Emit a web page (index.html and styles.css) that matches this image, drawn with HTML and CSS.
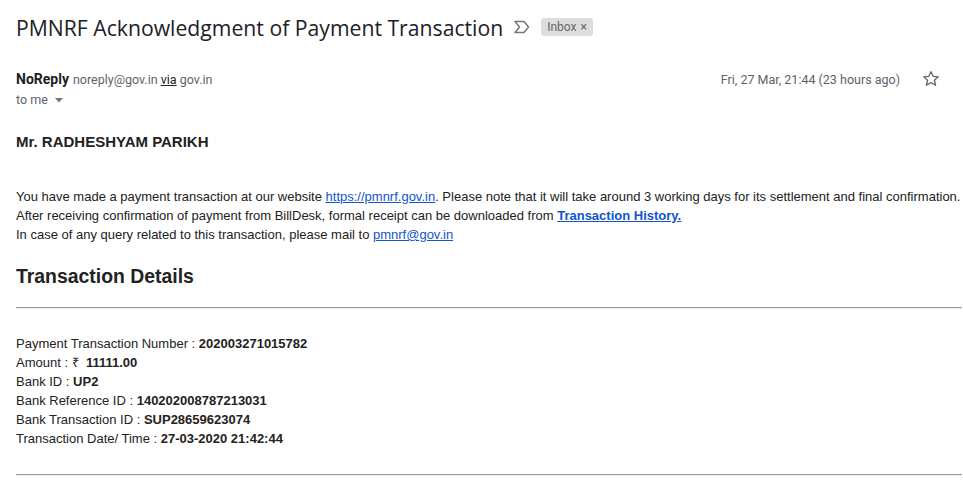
FILE: index.html
```html
<!DOCTYPE html>
<html>
<head>
<meta charset="utf-8">
<link rel="stylesheet" href="styles.css">
</head>
<body>
<div class="page">
  <div class="subject-row">
    <h1 class="subject">PMNRF Acknowledgment of Payment Transaction</h1>
    <svg class="marker" width="18" height="14" viewBox="0 0 18 14"><path d="M2 1.5h9l4.5 5.5L11 12.5H2l4.5-5.5z" fill="none" stroke="#777" stroke-width="1.5" stroke-linejoin="round"/></svg>
    <span class="label">Inbox <span class="x">×</span></span>
  </div>
  <div class="sender-row">
    <div class="sender">
      <div class="from"><span class="name">NoReply</span> <span class="addr">noreply@gov.in <u>via</u> gov.in</span></div>
      <div class="tome">to me <svg width="8" height="5" viewBox="0 0 8 5"><path d="M0 0h8L4 4.5z" fill="#777"/></svg></div>
    </div>
    <div class="meta">
      <span class="date">Fri, 27 Mar, 21:44 (23 hours ago)</span>
      <svg class="star" width="20" height="20" viewBox="0 0 24 24"><path d="M12 3.2l2.6 5.6 6.1.6-4.6 4.1 1.4 6L12 16.4l-5.5 3.1 1.4-6-4.6-4.1 6.1-.6z" fill="none" stroke="#666" stroke-width="1.6" stroke-linejoin="round"/></svg>
    </div>
  </div>
  <div class="body">
    <p class="salute">Mr. RADHESHYAM PARIKH</p>
    <p class="text">You have made a payment transaction at our website <a href="#">https://pmnrf.gov.in</a>. Please note that it will take around 3 working days for its settlement and final confirmation.<br>After receiving confirmation of payment from BillDesk, formal receipt can be downloaded from <a href="#" class="strong">Transaction History.</a><br>In case of any query related to this transaction, please mail to <a href="#">pmnrf@gov.in</a></p>
    <h2 class="heading">Transaction Details</h2>
    <hr class="rule">
    <div class="details">
      <div>Payment Transaction Number : <b>202003271015782</b></div>
      <div>Amount : ₹&nbsp; <b>11111.00</b></div>
      <div>Bank ID : <b>UP2</b></div>
      <div>Bank Reference ID : <b>140202008787213031</b></div>
      <div>Bank Transaction ID : <b>SUP28659623074</b></div>
      <div>Transaction Date/ Time : <b>27-03-2020 21:42:44</b></div>
    </div>
    <hr class="rule">
  </div>
</div>
</body>
</html>
```
FILE: styles.css
```css
html, body { margin: 0; padding: 0; background: #fff; }
.page { padding: 0 0 0 16px; font-family: Roboto, "Liberation Sans", sans-serif; color: #222; }
.subject-row { display: flex; align-items: center; height: 54px; }
.subject { margin: 0; font-family: "Open Sans", Roboto, sans-serif; font-weight: 400; font-size: 21.2px; color: #202124; }
.marker { margin-left: 10px; }
.label { margin-left: 10px; background: #ddd; color: #666; font-size: 12px; padding: 1px 6px; border-radius: 3px; line-height: 16px; }
.label .x { font-size: 12px; margin-left: 1px; }
.sender-row { display: flex; justify-content: space-between; align-items: flex-start; padding-top: 15px; }
.from { line-height: 20px; }
.name { font-weight: 700; font-size: 14px; color: #202124; }
.addr { font-size: 12.5px; color: #5f6368; }
.addr u { color: #222; }
.tome { font-size: 12.5px; color: #5f6368; line-height: 20px; margin-top: 0; }
.tome svg { margin-left: 4px; vertical-align: middle; }
.meta { display: flex; align-items: center; padding-right: 22px; height: 20px; }
.date { font-size: 12.5px; color: #5f6368; }
.star { margin-left: 21px; }
.body { font-family: "Liberation Sans", Arial, sans-serif; color: #222; padding-right: 1px; }
.salute { margin: 23px 0 0; font-weight: 700; font-size: 15px; line-height: 17px; }
.text { margin: 37px 0 0; font-size: 13px; line-height: 19px; }
.text a { color: #15c; }
.text a.strong { font-weight: 700; }
.heading { margin: 20px 0 0; font-size: 19.4px; font-weight: 700; line-height: 24px; }
.rule { margin: 19px 0 0; border: 0; border-top: 1px solid #999; border-bottom: 1px solid #eee; height: 0; }
.details { margin-top: 25px; font-size: 13px; line-height: 19px; margin-bottom: 26px; }
```
